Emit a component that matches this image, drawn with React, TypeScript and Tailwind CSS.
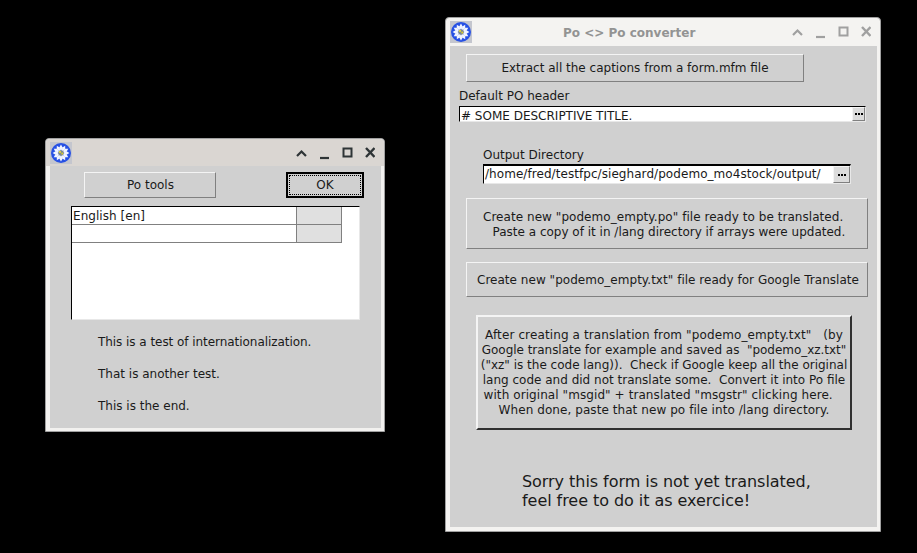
import React from "react";

const Daisy = () => {
  const petals = Array.from({ length: 12 }, (_, i) => i * 30);
  return (
    <svg width="22" height="22" viewBox="0 0 22 22" className="shrink-0">
      <rect width="22" height="22" fill="#c4c6ce" />
      <circle cx="11" cy="11" r="10" fill="#2650e4" />
      {petals.map((a) => (
        <path key={a} d="M11 10 L9.3 5.5 L11 2.6 L12.7 5.5 Z" fill="#f2f5ff" transform={`rotate(${a} 11 11)`} />
      ))}
      <circle cx="11" cy="11" r="2.8" fill="#7d8a92" />
      <circle cx="10" cy="10" r="1.1" fill="#ecdc30" />
      <circle cx="12.2" cy="11.6" r="1" fill="#dccc28" />
    </svg>
  );
};

const Controls = ({ color }: { color: string }) => (
  <svg width="79" height="14" viewBox="0 0 79 14" fill="none" stroke={color} strokeWidth="2.2" className="shrink-0">
    <path d="M1 10 L5.5 5.5 L10 10" />
    <path d="M24 12 L33 12" />
    <rect x="47.5" y="2.5" width="8" height="8" strokeWidth="2" />
    <path d="M70 2 L78.5 11 M78.5 2 L70 11" strokeWidth="2.4" />
  </svg>
);

const btn =
  "flex flex-col items-center justify-center whitespace-pre border border-t-[#f4f4f4] border-l-[#f4f4f4] border-r-[#808080] border-b-[#808080] bg-[#d0d0d0]";

const Browse = ({ className }: { className: string }) => (
  <div className={`flex items-center justify-center gap-[1px] border border-t-[#f4f4f4] border-l-[#f4f4f4] border-r-[#808080] border-b-[#808080] bg-[#dcdcdc] ${className}`}>
    <span className="h-[2px] w-[2px] bg-black" />
    <span className="h-[2px] w-[2px] bg-black" />
    <span className="h-[2px] w-[2px] bg-black" />
  </div>
);

export default function App() {
  return (
    <div className="relative h-[553px] w-[917px] overflow-hidden bg-black font-['DejaVu_Sans',sans-serif] text-[12px] leading-[15px] text-[#1a1a1a]">
      {/* Window 1 */}
      <div className="absolute left-[45px] top-[138px] flex h-[294px] w-[340px] flex-col rounded-t-[4px] border border-[#a0a0a0] bg-[#f2f1ef]">
        <div className="flex h-[27px] shrink-0 items-center justify-between rounded-t-[4px] bg-[#dad6d2] pl-[4px] pr-[9px]">
          <Daisy />
          <Controls color="#2e3436" />
        </div>
        <div className="ml-[4px] h-[262px] w-[331px] bg-[#d0d0d0]">
          <div className="ml-[34px] flex pt-[6px]">
            <div className={`${btn} h-[26px] w-[132px] pl-[1px]`}>Po tools</div>
            <div className="ml-[70px] flex h-[26px] w-[78px] items-center justify-center border-2 border-black bg-[#d0d0d0]">
              <div className="flex h-[20px] w-[72px] items-center justify-center border border-dotted border-black text-[12px]">OK</div>
            </div>
          </div>
          <div className="ml-[21px] mt-[8px] h-[114px] w-[289px] border border-b-[#e8e8e8] border-l-black border-r-[#e8e8e8] border-t-black bg-white">
            <div className="flex h-[18px] w-[270px] border-b border-[#808080]">
              <div className="w-[224px] pl-[1px] pt-[1px] leading-[16px] tracking-[0.05px]">English [en]</div>
              <div className="w-[46px] border-l border-r border-[#808080] bg-[#e0e0e0]" />
            </div>
            <div className="flex h-[18px] w-[270px] border-b border-[#808080]">
              <div className="w-[224px]" />
              <div className="w-[46px] border-l border-r border-[#808080] bg-[#e0e0e0]" />
            </div>
          </div>
          <div className="ml-[48px] mt-[15px] flex flex-col gap-[17px]">
            <div className="tracking-[-0.05px]">This is a test of internationalization.</div>
            <div>That is another test.</div>
            <div>This is the end.</div>
          </div>
        </div>
      </div>

      {/* Window 2 */}
      <div className="absolute left-[445px] top-[17px] flex h-[515px] w-[436px] flex-col rounded-t-[4px] border border-[#a0a0a0] bg-[#f4f3f1]">
        <div className="relative flex h-[28px] shrink-0 items-center justify-between pl-[4px] pr-[9px]">
          <Daisy />
          <span className="absolute left-[117px] top-[7px] pt-[1px] text-[12px] font-bold text-[#939393]">Po &lt;&gt; Po converter</span>
          <Controls color="#a0a0a0" />
        </div>
        <div className="ml-[4px] h-[481px] w-[427px] bg-[#d0d0d0]">
          <div className={`${btn} ml-[16px] mt-[8px] h-[28px] w-[338px]`}>Extract all the captions from a form.mfm file</div>
          <div className="ml-[9px] mt-[7px]">Default PO header</div>
          <div className="ml-[9px] mt-[2px] flex h-[16px] w-[407px] items-start overflow-hidden border border-b-[#e8e8e8] border-l-black border-r-[#e8e8e8] border-t-black bg-white">
            <span className="flex-1 whitespace-pre pl-[1px] pt-[1px] leading-[16px]"># SOME DESCRIPTIVE TITLE.</span>
            <Browse className="h-[14px] w-[13px]" />
          </div>
          <div className="ml-[33px] mt-[26px]">Output Directory</div>
          <div className="ml-[33px] mt-[1px] flex h-[20px] w-[368px] items-center overflow-hidden border border-b-[#e8e8e8] border-l-black border-r-[#e8e8e8] border-t-[2px] border-t-black bg-white">
            <span className="flex-1 whitespace-pre pl-[1px] tracking-[0.06px]">/home/fred/testfpc/sieghard/podemo_mo4stock/output/</span>
            <Browse className="h-[17px] w-[17px]" />
          </div>
          <div className={`${btn} ml-[16px] mt-[14px] h-[51px] w-[402px] pt-[2px]`}>
            <div className="tracking-[0.05px]">{'Create new "podemo_empty.po" file ready to be translated.  '}</div>
            <div>{' Paste a copy of it in /lang directory if arrays were updated.'}</div>
          </div>
          <div className={`${btn} ml-[16px] mt-[13px] h-[35px] w-[402px] pl-[2px] pt-[2px] tracking-[0.03px]`}>{'Create new "podemo_empty.txt" file ready for Google Translate'}</div>
          <div className="ml-[26px] mt-[18px] flex h-[115px] w-[376px] flex-col items-center justify-center whitespace-pre border-2 border-b-[#303030] border-l-[#f4f4f4] border-r-[#303030] border-t-[#f4f4f4] bg-[#d0d0d0]">
            <div className="tracking-[0.12px]">{'After creating a translation from "podemo_empty.txt"   (by'}</div>
            <div className="tracking-[-0.03px]">{'Google translate for example and saved as  "podemo_xz.txt"'}</div>
            <div>{'("xz" is the code lang)).  Check if Google keep all the original'}</div>
            <div>{'lang code and did not translate some.  Convert it into Po file'}</div>
            <div className="tracking-[0.08px]">{'with original "msgid" + translated "msgstr" clicking here.   '}</div>
            <div className="tracking-[0.07px]">{'When done, paste that new po file into /lang directory.'}</div>
          </div>
          <div className="ml-[72px] mt-[42px] text-[16px] leading-[19px] tracking-[-0.05px]">
            <div>Sorry this form is not yet translated,</div>
            <div>feel free to do it as exercice!</div>
          </div>
        </div>
      </div>
    </div>
  );
}
